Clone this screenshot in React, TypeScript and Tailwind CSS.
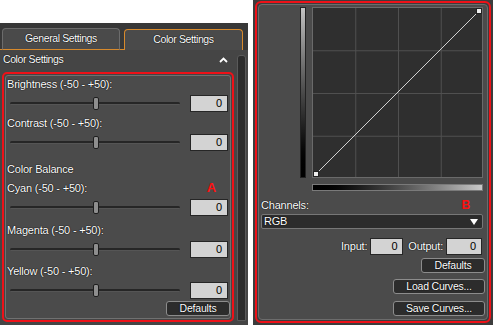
import React from "react";

const sliders = [
  { label: "Brightness (-50 - +50):", mt: "mt-[1px]" },
  { label: "Contrast (-50 - +50):", mt: "mt-[4px]" },
];
const balance = [
  { label: "Cyan (-50 - +50):", mt: "mt-[5px]", mark: true },
  { label: "Magenta (-50 - +50):", mt: "mt-[7px]" },
  { label: "Yellow (-50 - +50):", mt: "mt-[6px]" },
];

function Slider() {
  return (
    <div className="relative flex h-[13px] w-[170px] items-center">
      <div className="h-[3px] w-full rounded-full border-b border-[#555] bg-[#262626]" />
      <div className="absolute left-[83px] top-0 h-[13px] w-[6px] rounded-[2px] border border-[#1e1e1e] bg-[#8e8e8e]" />
    </div>
  );
}

function NumBox({ w }: { w: string }) {
  return (
    <div className={`${w} h-[17px] border border-[#262626] bg-[#d3d3d3] pr-[5px] text-right text-[11px] leading-[15px] text-black [text-shadow:none]`}>
      0
    </div>
  );
}

function Btn({ w, children }: { w: string; children: React.ReactNode }) {
  return (
    <div className={`${w} h-[15px] rounded-[3px] border border-[#8c8c8c] bg-[#2c2c2c] text-center text-[10.5px] leading-[13px]`}>
      {children}
    </div>
  );
}

function SliderRow({ label, mt, mark }: { label: string; mt: string; mark?: boolean }) {
  return (
    <div className={mt}>
      <div className="flex h-[14px] items-center justify-between pl-px pr-[14px] leading-[14px]">
        <span>{label}</span>
        {mark && <span className="text-[13px] font-bold text-[#ff1010] [text-shadow:none]">A</span>}
      </div>
      <div className="mt-[4px] flex items-center justify-between pl-[4px] pr-[2px]">
        <Slider />
        <NumBox w="w-[38px]" />
      </div>
    </div>
  );
}

function CurveGraph() {
  const q = [42.75, 85.5, 128.25];
  return (
    <div className="h-[171px] w-[171px] border border-[#6a6a6a] bg-[#2f2f2f]">
      <svg width="169" height="169" viewBox="0 0 169 169">
        {q.map((v) => (
          <g key={v} stroke="#505050" strokeWidth="1">
            <line x1={v} y1="0" x2={v} y2="169" />
            <line x1="0" y1={v} x2="169" y2={v} />
          </g>
        ))}
        <line x1="3" y1="166" x2="166" y2="3" stroke="#d0d0d0" strokeWidth="1" />
        <rect x="0.5" y="163.5" width="5" height="5" fill="#eee" stroke="#222" />
        <rect x="163.5" y="0.5" width="5" height="5" fill="#eee" stroke="#222" />
      </svg>
    </div>
  );
}

export default function App() {
  return (
    <div className="flex h-[325px] w-[500px] bg-white font-['Liberation_Sans',Arial,sans-serif] text-[11px] tracking-[-0.2px] text-white [text-shadow:0_0_1px_#000,0_0_1px_#000]">
      {/* left panel */}
      <div className="mt-[23px] flex w-[248px] flex-col bg-[#454545]">
        <div className="flex h-[27px] items-end bg-[#383838] text-[10.5px] tracking-[-0.4px]">
          <div className="h-px w-[2px] bg-[#d88a2c]" />
          <div className="flex h-[22px] w-[118px] items-center justify-center rounded-t-[4px] border border-[#6c6c6c] border-b-[#d88a2c] bg-[#4a4a4a]">
            General Settings
          </div>
          <div className="h-px w-[4px] bg-[#d88a2c]" />
          <div className="flex h-[21px] w-[119px] items-center justify-center rounded-t-[4px] border border-b-0 border-[#d88a2c] bg-[#4a4a4a]">
            Color Settings
          </div>
        </div>
        <div className="flex flex-1">
          <div className="flex w-[236px] flex-col">
            <div className="flex h-[20px] items-center justify-between pl-[3px] pr-[8px] text-[10.5px] tracking-[-0.4px]">
              <span>Color Settings</span>
              <svg width="9" height="6" viewBox="0 0 9 6">
                <path d="M1 5 L4.5 1.5 L8 5" fill="none" stroke="#fff" strokeWidth="1.8" />
              </svg>
            </div>
            <div className="ml-[2px] mt-[2px] h-[250px] w-[232px] rounded-[5px] border-2 border-[#ee1118] p-px">
              <div className="flex h-full flex-col rounded-[3px] border border-[#707070] bg-[#4b4b4b]">
                {sliders.map((s) => (
                  <SliderRow key={s.label} {...s} />
                ))}
                <div className="mt-[11px] h-[14px] pl-px leading-[14px]">Color Balance</div>
                {balance.map((s) => (
                  <SliderRow key={s.label} {...s} />
                ))}
                <div className="mt-[2px] flex justify-end">
                  <Btn w="w-[64px]">Defaults</Btn>
                </div>
              </div>
            </div>
          </div>
          <div className="mb-[4px] ml-px mt-[5px] w-[9px] rounded-t-[3px] border border-[#5a5a5a] bg-[#2c2c2c]" />
        </div>
      </div>

      {/* right panel */}
      <div className="ml-[5px] h-[325px] w-[240px] bg-[#3c3c3c] px-[2px] pt-px">
        <div className="h-[322px] rounded-[6px] border-2 border-[#ee1118] p-px">
          <div className="flex h-full flex-col rounded-[4px] border border-[#6c6c6c] bg-[#4b4b4b]">
            <div className="flex gap-[6px] pl-[41px] pt-[2px]">
              <div className="h-[171px] w-[6px] border border-[#222] bg-gradient-to-b from-[#c4c4c4] to-[#000]" />
              <CurveGraph />
            </div>
            <div className="ml-[53px] mt-[6px] h-[7px] w-[171px] border border-[#7a7a7a] bg-gradient-to-r from-[#000] to-[#c8c8c8]" />
            <div className="mt-[7px] flex h-[14px] items-center justify-between pl-[2px] pr-[17px]">
              <span>Channels:</span>
              <span className="text-[12px] font-bold text-[#ff1010] [text-shadow:none]">B</span>
            </div>
            <div className="ml-[2px] mr-[4px] mt-[2px] flex h-[15px] items-center justify-between rounded-[2px] border border-[#777] bg-[#2c2c2c] pl-[2px] pr-[4px]">
              <span>RGB</span>
              <svg width="8" height="6" viewBox="0 0 8 6">
                <path d="M0 0 H8 L4 6 Z" fill="#fff" />
              </svg>
            </div>
            <div className="mt-[9px] flex items-center justify-end pr-[5px]">
              <span className="mr-[3px]">Input:</span>
              <NumBox w="w-[33px]" />
              <span className="ml-[5px] mr-[3px]">Output:</span>
              <NumBox w="w-[36px]" />
            </div>
            <div className="flex flex-col items-end pr-[2px]">
              <div className="mt-[3px]">
                <Btn w="w-[64px]">Defaults</Btn>
              </div>
              <div className="mt-[6px]">
                <Btn w="w-[92px]">Load Curves...</Btn>
              </div>
              <div className="mt-[7px]">
                <Btn w="w-[92px]">Save Curves...</Btn>
              </div>
            </div>
          </div>
        </div>
      </div>
    </div>
  );
}
